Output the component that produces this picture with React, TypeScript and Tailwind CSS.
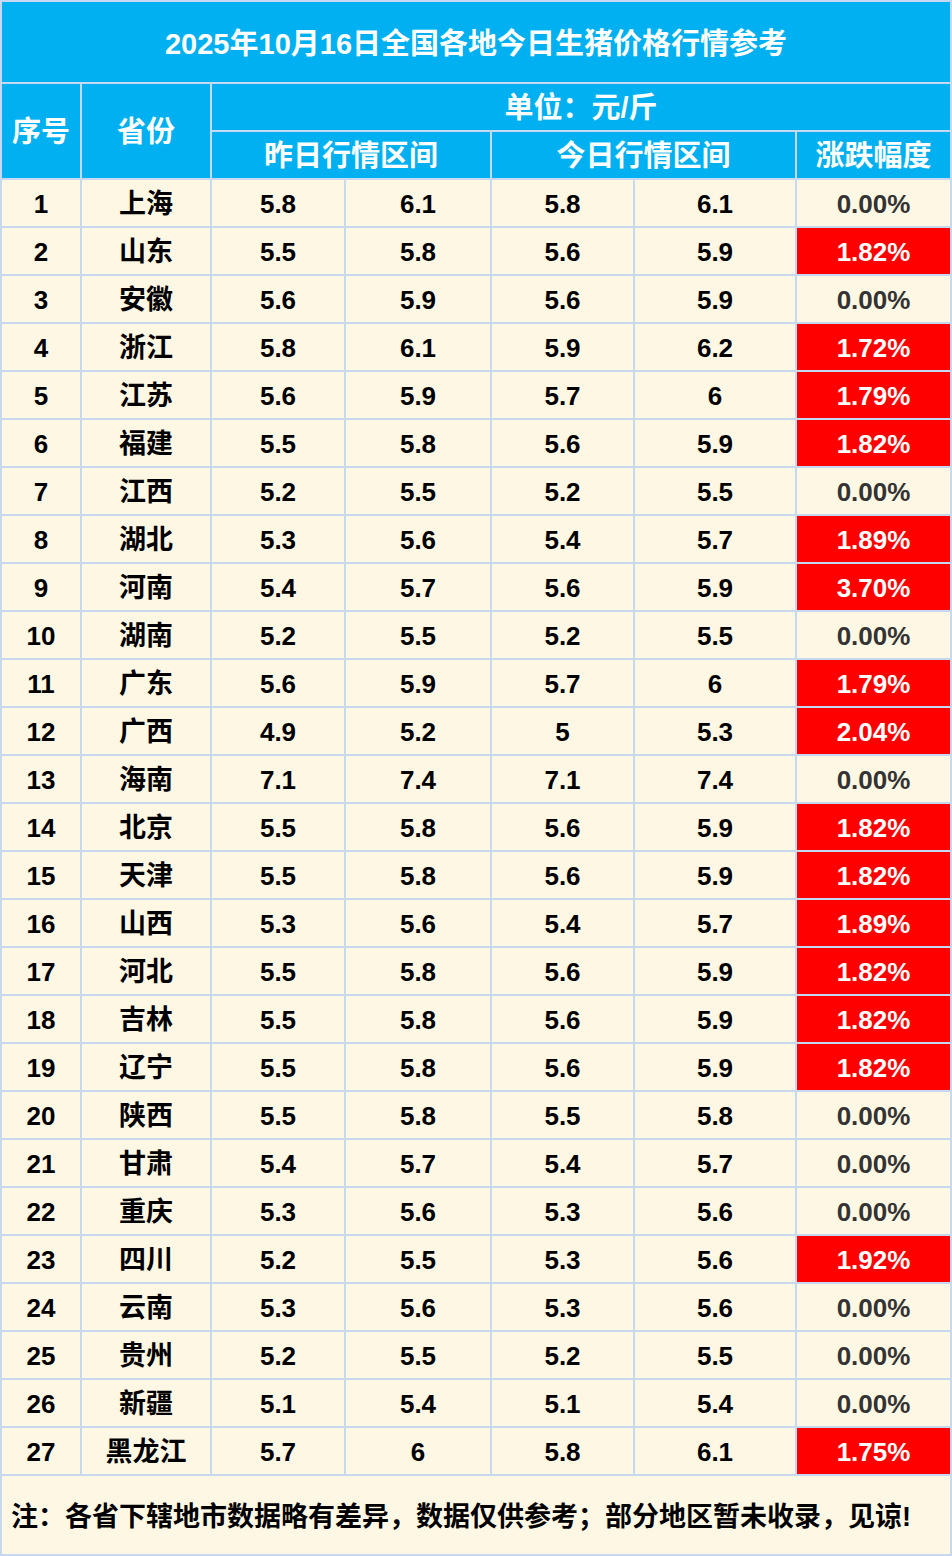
const rows: [string, string, string, string, string, string][] = [
  ["上海", "5.8", "6.1", "5.8", "6.1", "0.00%"],
  ["山东", "5.5", "5.8", "5.6", "5.9", "1.82%"],
  ["安徽", "5.6", "5.9", "5.6", "5.9", "0.00%"],
  ["浙江", "5.8", "6.1", "5.9", "6.2", "1.72%"],
  ["江苏", "5.6", "5.9", "5.7", "6", "1.79%"],
  ["福建", "5.5", "5.8", "5.6", "5.9", "1.82%"],
  ["江西", "5.2", "5.5", "5.2", "5.5", "0.00%"],
  ["湖北", "5.3", "5.6", "5.4", "5.7", "1.89%"],
  ["河南", "5.4", "5.7", "5.6", "5.9", "3.70%"],
  ["湖南", "5.2", "5.5", "5.2", "5.5", "0.00%"],
  ["广东", "5.6", "5.9", "5.7", "6", "1.79%"],
  ["广西", "4.9", "5.2", "5", "5.3", "2.04%"],
  ["海南", "7.1", "7.4", "7.1", "7.4", "0.00%"],
  ["北京", "5.5", "5.8", "5.6", "5.9", "1.82%"],
  ["天津", "5.5", "5.8", "5.6", "5.9", "1.82%"],
  ["山西", "5.3", "5.6", "5.4", "5.7", "1.89%"],
  ["河北", "5.5", "5.8", "5.6", "5.9", "1.82%"],
  ["吉林", "5.5", "5.8", "5.6", "5.9", "1.82%"],
  ["辽宁", "5.5", "5.8", "5.6", "5.9", "1.82%"],
  ["陕西", "5.5", "5.8", "5.5", "5.8", "0.00%"],
  ["甘肃", "5.4", "5.7", "5.4", "5.7", "0.00%"],
  ["重庆", "5.3", "5.6", "5.3", "5.6", "0.00%"],
  ["四川", "5.2", "5.5", "5.3", "5.6", "1.92%"],
  ["云南", "5.3", "5.6", "5.3", "5.6", "0.00%"],
  ["贵州", "5.2", "5.5", "5.2", "5.5", "0.00%"],
  ["新疆", "5.1", "5.4", "5.1", "5.4", "0.00%"],
  ["黑龙江", "5.7", "6", "5.8", "6.1", "1.75%"],
];

const head = "flex items-center justify-center bg-[#00b0f0] text-white text-[29px] font-bold pt-[3px]";
const cell = "flex items-center justify-center bg-[#fdf7e4] text-black text-[26px] font-bold pt-[2px]";

export default function App() {
  return (
    <div
      className="w-[952px] h-[1556px]"
      style={{ fontFamily: '"Liberation Sans", "Noto Sans CJK SC", sans-serif' }}
    >
      <div className="grid grid-cols-[78px_128px_132px_144px_141px_160px_153px] grid-rows-[80px_46px_46px_repeat(27,46px)_78px] gap-[2px] p-[2px] bg-[#c6d9f1]">
        {/* title */}
        <div className={`${head} col-span-7 pt-[5px]`}>2025年10月16日全国各地今日生猪价格行情参考</div>

        {/* header */}
        <div className={`${head} row-span-2`}>序号</div>
        <div className={`${head} row-span-2`}>省份</div>
        <div className={`${head} col-span-5`}>单位：元/斤</div>
        <div className={`${head} col-span-2`}>昨日行情区间</div>
        <div className={`${head} col-span-2`}>今日行情区间</div>
        <div className={head}>涨跌幅度</div>

        {/* data */}
        {rows.map((r, i) => {
          const up = r[5] !== "0.00%";
          return [
            <div key={`n${i}`} className={cell}>{i + 1}</div>,
            <div key={`p${i}`} className={`${cell} text-[27px]`}>{r[0]}</div>,
            <div key={`a${i}`} className={cell}>{r[1]}</div>,
            <div key={`b${i}`} className={cell}>{r[2]}</div>,
            <div key={`c${i}`} className={cell}>{r[3]}</div>,
            <div key={`d${i}`} className={cell}>{r[4]}</div>,
            <div
              key={`e${i}`}
              className={
                up
                  ? "flex items-center justify-center bg-[#ff0000] text-white text-[26px] font-bold pt-[2px]"
                  : "flex items-center justify-center bg-[#fdf7e4] text-[#333333] text-[26px] font-bold pt-[2px]"
              }
            >
              {r[5]}
            </div>,
          ];
        })}

        {/* note */}
        <div className="col-span-7 flex items-center bg-[#fdf7e4] pl-[9px] pt-[4px] text-[27px] font-bold text-black">
          注：各省下辖地市数据略有差异，数据仅供参考；部分地区暂未收录，见谅!
        </div>
      </div>
    </div>
  );
}
